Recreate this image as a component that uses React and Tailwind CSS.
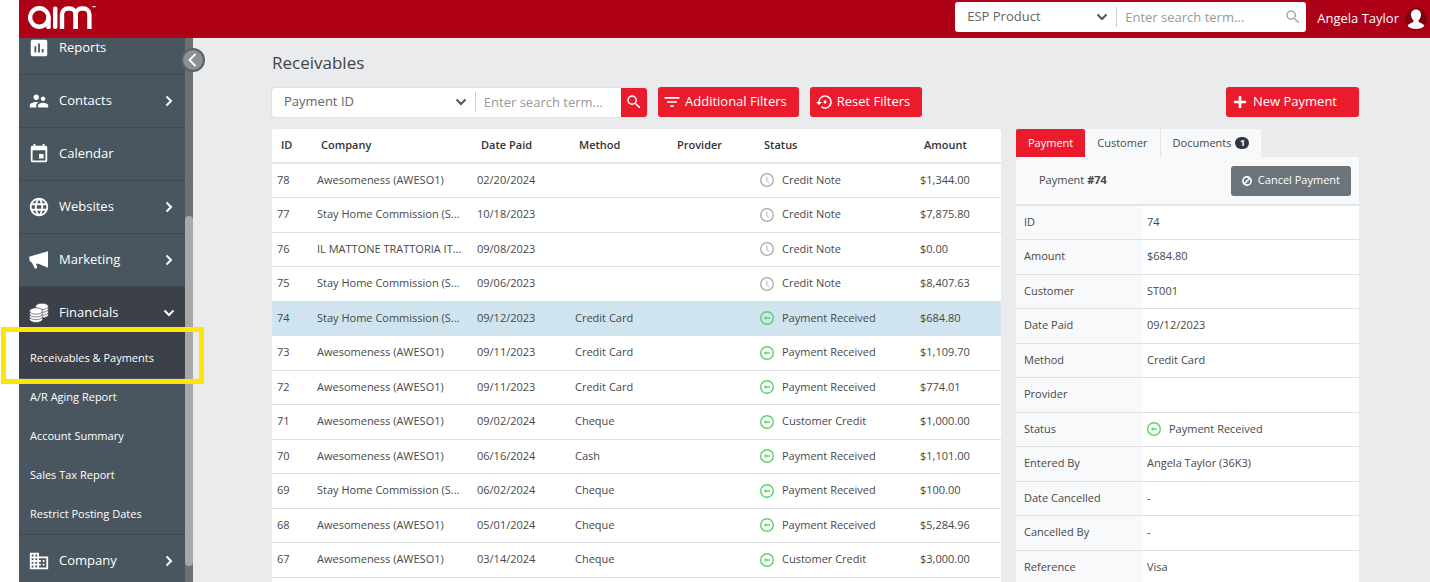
import { useState } from "react";
import clsx from "clsx";
import {
  MdAssessment,
  MdBusiness,
  MdEvent,
  MdFilterList,
  MdLanguage,
  MdSearch,
  MdSettingsBackupRestore,
  MdSupervisorAccount,
} from "react-icons/md";
import { FaPlus } from "react-icons/fa";

const menuTop = [
  { label: "Reports", icon: MdAssessment },
  { label: "Contacts", icon: MdSupervisorAccount, arrow: true },
  { label: "Calendar", icon: MdEvent },
  { label: "Websites", icon: MdLanguage, arrow: true },
  { label: "Marketing", icon: Bullhorn, arrow: true },
];

const financials = ["A/R Aging Report", "Account Summary", "Sales Tax Report", "Restrict Posting Dates"];

const payments = [
  { id: 78, company: "Awesomeness (AWESO1)", date: "02/20/2024", method: "", status: "Credit Note", amount: "$1,344.00" },
  { id: 77, company: "Stay Home Commission (S...", date: "10/18/2023", method: "", status: "Credit Note", amount: "$7,875.80" },
  { id: 76, company: "IL MATTONE TRATTORIA IT...", date: "09/08/2023", method: "", status: "Credit Note", amount: "$0.00" },
  { id: 75, company: "Stay Home Commission (S...", date: "09/06/2023", method: "", status: "Credit Note", amount: "$8,407.63" },
  { id: 74, company: "Stay Home Commission (S...", date: "09/12/2023", method: "Credit Card", status: "Payment Received", amount: "$684.80" },
  { id: 73, company: "Awesomeness (AWESO1)", date: "09/11/2023", method: "Credit Card", status: "Payment Received", amount: "$1,109.70" },
  { id: 72, company: "Awesomeness (AWESO1)", date: "09/11/2023", method: "Credit Card", status: "Payment Received", amount: "$774.01" },
  { id: 71, company: "Awesomeness (AWESO1)", date: "09/02/2024", method: "Cheque", status: "Customer Credit", amount: "$1,000.00" },
  { id: 70, company: "Awesomeness (AWESO1)", date: "06/16/2024", method: "Cash", status: "Payment Received", amount: "$1,101.00" },
  { id: 69, company: "Stay Home Commission (S...", date: "06/02/2024", method: "Cheque", status: "Payment Received", amount: "$100.00" },
  { id: 68, company: "Awesomeness (AWESO1)", date: "05/01/2024", method: "Cheque", status: "Payment Received", amount: "$5,284.96" },
  { id: 67, company: "Awesomeness (AWESO1)", date: "03/14/2024", method: "Cheque", status: "Customer Credit", amount: "$3,000.00" },
];

const details = [
  ["ID", "74"],
  ["Amount", "$684.80"],
  ["Customer", "ST001"],
  ["Date Paid", "09/12/2023"],
  ["Method", "Credit Card"],
  ["Provider", ""],
  ["Status", "Payment Received"],
  ["Entered By", "Angela Taylor (36K3)"],
  ["Date Cancelled", "-"],
  ["Cancelled By", "-"],
  ["Reference", "Visa"],
];

function Logo() {
  return (
    <svg viewBox="0 0 68 23" className="h-[23px] w-[68px]" fill="none" stroke="white" strokeWidth="4.4" role="img" aria-label="aim">
      <circle cx="11.300" cy="11.500" r="9.200" />
      <rect x="18.300" y="10" width="4.400" height="13" rx="1.500" fill="white" stroke="none" />
      <rect x="25" y="0.500" width="4.400" height="22.500" rx="2" fill="white" stroke="none" />
      <rect x="34" y="2.500" width="13.700" height="40" rx="6" />
      <rect x="47.700" y="2.500" width="13.700" height="40" rx="6" />
      <rect x="64.500" y="0" width="3" height="1.200" fill="white" stroke="none" />
    </svg>
  );
}

function Bullhorn({ className }) {
  return (
    <svg viewBox="0 0 20 20" className={className} fill="currentColor">
      <path d="M18.200 2v15L9.500 13.400H7.300l1.200 3.900-2.200.7-2.700-5.600L1.500 11 1 7z" />
    </svg>
  );
}

function Coins({ className }) {
  return (
    <svg viewBox="0 0 20 20" className={className} fill="currentColor" stroke="#3b4049" strokeWidth="0.600">
      <ellipse cx="12.700" cy="11.500" rx="5.900" ry="2.900" />
      <ellipse cx="12.700" cy="9" rx="5.900" ry="2.900" />
      <ellipse cx="12.700" cy="6.500" rx="5.900" ry="2.900" />
      <ellipse cx="12.700" cy="4" rx="5.900" ry="2.900" />
      <ellipse cx="7.300" cy="15.700" rx="5.900" ry="2.900" />
      <ellipse cx="7.300" cy="13.200" rx="5.900" ry="2.900" />
      <ellipse cx="7.300" cy="10.700" rx="5.900" ry="2.900" />
      <ellipse cx="7.300" cy="8.200" rx="5.900" ry="2.900" />
    </svg>
  );
}

function Chevron({ className }) {
  return (
    <svg viewBox="0 0 12 12" className={className} fill="none" stroke="currentColor" strokeWidth="2">
      <path d="M3.500 1.500 8 6l-4.500 4.500" />
    </svg>
  );
}

function Avatar() {
  return (
    <svg viewBox="0 0 22 22" className="size-[22px] shrink-0">
      <circle cx="11" cy="11" r="11" fill="#7d0013" />
      <path fill="white" d="M11 1.500c3.300 0 5 2.300 5 5.300 0 2-.9 4.200-2.400 5.500v1.500c.3 1 5 1.600 5.700 4.200C17.500 20 14.500 21 11 21s-6.500-1-8.300-3c.7-2.600 5.400-3.200 5.700-4.200v-1.500C6.900 11 6 8.800 6 6.800c0-3 1.700-5.300 5-5.300z" />
    </svg>
  );
}

function StatusIcon({ status }) {
  if (status === "Credit Note") {
    return (
      <svg viewBox="0 0 14 14" className="size-[14px] shrink-0" fill="none" stroke="#a9a9a9">
        <circle cx="7" cy="7" r="6.300" strokeWidth="1.300" />
        <path d="M6.800 3.800V7.500L9 9.800" />
      </svg>
    );
  }
  return (
    <svg viewBox="0 0 14 14" className="size-[14px] shrink-0" fill="none" stroke="#57d466">
      <circle cx="7" cy="7" r="6.300" strokeWidth="1.400" />
      <path d="M5 7h5" strokeWidth="1.400" />
      <path d="M6.300 5v4L3.800 7z" fill="#57d466" stroke="none" />
    </svg>
  );
}

function Status({ status }) {
  return (
    <span className="flex items-center gap-2">
      <StatusIcon status={status} />
      {status}
    </span>
  );
}

function MenuItem({ label, icon: Icon, arrow, open }) {
  return (
    <a
      href="#"
      className={clsx(
        "flex shrink-0 items-center pl-[9px] pr-2.5 text-[13px]",
        open ? "h-[52px] bg-[#3b4049]" : "h-[53px] border-b border-[#3f4a53]"
      )}
    >
      <Icon className="size-[22px]" />
      <span className="ml-[9px] grow">{label}</span>
      {arrow && <Chevron className={clsx("size-3", open && "rotate-90")} />}
    </a>
  );
}

function Sidebar() {
  return (
    <aside className="relative flex w-[174px] shrink-0 bg-[#49565f] text-white">
      <nav className="-mt-4 flex grow flex-col">
        {menuTop.map(item => (
          <MenuItem key={item.label} {...item} />
        ))}
        <MenuItem label="Financials" icon={Coins} arrow open />
        <div className="relative">
          <a href="#" className="flex h-[39px] items-center bg-[#3b4049] pl-[11px] text-[11px]">
            Receivables &amp; Payments
          </a>
          <div className="pointer-events-none absolute -bottom-1.5 -left-[18px] -right-[19px] -top-3 z-10 border-[5px] border-[#ffe600]" />
        </div>
        <div className="shrink-0 border-b border-[#3f4a53]">
          {financials.map(label => (
            <a key={label} href="#" className="flex h-[39px] items-center pl-[11px] text-[11px]">
              {label}
            </a>
          ))}
        </div>
        <MenuItem label="Company" icon={MdBusiness} arrow />
      </nav>
      <div className="w-2 shrink-0 bg-[#6f6f6f] pt-[178px]">
        <div className="h-[350px] rounded-sm bg-[#a8a8a8]" />
      </div>
      <button
        aria-label="Collapse menu"
        className="absolute -right-3 top-2.5 z-10 flex size-6 items-center justify-center rounded-full border-2 border-[#56616a] bg-[#8f8f8f]"
      >
        <svg viewBox="0 0 12 16" className="h-4 w-3" fill="none" stroke="white" strokeWidth="1.800">
          <path d="M8.500 2 2.500 8l6 6" />
        </svg>
      </button>
    </aside>
  );
}

function Picker({ label, options, className }) {
  return (
    <div className={clsx("relative flex h-full items-center", className)}>
      <select aria-label={label} className="h-full w-full appearance-none pl-3 pr-8 text-[13px] text-[#666] outline-none">
        {options.map(option => (
          <option key={option}>{option}</option>
        ))}
      </select>
      <Chevron className="pointer-events-none absolute right-2 size-3 rotate-90 text-[#555]" />
    </div>
  );
}

function Header() {
  return (
    <header className="relative z-20 flex h-[38px] shrink-0 items-center bg-[#ae0017] pl-[9px]">
      <a href="#" className="-mt-1">
        <Logo />
      </a>
      <div className="mb-1 ml-auto flex h-[30px] w-[351px] items-center overflow-hidden rounded-[3px] bg-white">
        <Picker label="Search type" options={["ESP Product", "Order"]} className="w-[161px] shrink-0" />
        <div className="h-5 w-px bg-[#ccc]" />
        <input aria-label="Search" placeholder="Enter search term..." className="h-full min-w-0 grow pl-2 text-[13px] outline-none placeholder:text-[#999]" />
        <button aria-label="Search" className="px-1">
          <MdSearch className="size-[18px] text-[#aaa]" />
        </button>
      </div>
      <a href="#" className="ml-[11px] mr-[3px] flex items-center gap-1.5 text-[13px] text-white">
        Angela Taylor
        <Avatar />
      </a>
    </header>
  );
}

function Toolbar() {
  return (
    <div className="mt-3 flex items-center">
      <div className="flex h-[29px] w-[375px] items-center overflow-hidden rounded-[3px] bg-white shadow-[0_0_1px_1px_#dfe0e2]">
        <Picker label="Filter by" options={["Payment ID", "Company"]} className="w-[203px] shrink-0" />
        <div className="h-5 w-px bg-[#ccc]" />
        <input aria-label="Filter term" placeholder="Enter search term..." className="h-full min-w-0 grow pl-2 text-[13px] outline-none placeholder:text-[#999]" />
        <button aria-label="Find" className="flex h-full w-[26px] shrink-0 items-center justify-center bg-[#ea1b2c]">
          <MdSearch className="size-[18px] text-white" />
        </button>
      </div>
      <button className="ml-[11px] flex h-[30px] items-center gap-[3px] rounded-[3px] bg-[#ea1b2c] pl-1 pr-3 text-[13px] text-white">
        <MdFilterList className="size-5" />
        Additional Filters
      </button>
      <button className="ml-[11px] flex h-[30px] items-center gap-[3px] rounded-[3px] bg-[#ea1b2c] pl-1.5 pr-3 text-[13px] text-white">
        <MdSettingsBackupRestore className="size-[18px]" />
        Reset Filters
      </button>
      <button className="ml-auto flex h-[30px] items-center gap-1.5 rounded-[3px] bg-[#ea1b2c] pl-[7px] pr-[22px] text-[13px] text-white">
        <FaPlus className="size-[14px]" />
        New Payment
      </button>
    </div>
  );
}

function PaymentsTable({ selected, onSelect }) {
  return (
    <table className="w-full table-fixed rounded-t-[3px] bg-white text-left text-[11px] text-[#484848]">
      <colgroup>
        <col className="w-[40px]" />
        <col className="w-[160px]" />
        <col className="w-[98px]" />
        <col className="w-[98px]" />
        <col className="w-[87px]" />
        <col className="w-[160px]" />
        <col className="w-[86px]" />
      </colgroup>
      <thead>
        <tr className="h-[34px] border-b-2 border-[#e3e4e6] text-[#333]">
          {["ID", "Company", "Date Paid", "Method", "Provider", "Status", "Amount"].map(title => (
            <th key={title} className="px-[9px] font-semibold">{title}</th>
          ))}
        </tr>
      </thead>
      <tbody>
        {payments.map(payment => (
          <tr
            key={payment.id}
            onClick={() => onSelect(payment.id)}
            className={clsx("border-b border-[#dfe0e2] odd:h-[34px] even:h-[35px]", payment.id === selected && "bg-[#cfe4ee]")}
          >
            <td className="px-[5px]">{payment.id}</td>
            <td className="whitespace-nowrap px-[5px]">{payment.company}</td>
            <td className="px-[5px]">{payment.date}</td>
            <td className="px-[5px]">{payment.method}</td>
            <td></td>
            <td className="px-[5px]">
              <Status status={payment.status} />
            </td>
            <td className="px-[5px]">{payment.amount}</td>
          </tr>
        ))}
        <tr className="h-[34px]"><td colSpan={7}></td></tr>
      </tbody>
    </table>
  );
}

function DetailPanel() {
  return (
    <div className="text-[11px] text-[#484848]">
      <div className="flex h-7" role="tablist">
        <button role="tab" aria-selected="true" className="rounded-t-[2px] bg-[#ea1b2c] px-3 text-white">Payment</button>
        <button role="tab" className="border-r border-[#e3e4e6] bg-[#f8f9fa] px-3">Customer</button>
        <button role="tab" className="flex items-center gap-1 bg-[#f8f9fa] px-3">
          Documents
          <span className="flex h-3 w-[14px] items-center justify-center rounded-full bg-[#32383e] text-[9px] font-bold text-white">1</span>
        </button>
      </div>
      <div className="flex h-[47px] items-center justify-between bg-[#f8f9fb] pl-[23px] pr-2">
        <span>Payment <b>#74</b></span>
        <button className="flex h-[30px] items-center gap-1.5 rounded-[3px] bg-[#6c747c] px-[11px] text-white">
          <svg viewBox="0 0 10 10" className="size-2.5" fill="none" stroke="currentColor" strokeWidth="1.600">
            <circle cx="5" cy="5" r="4.100" />
            <path d="M2.300 7.700 7.700 2.300" />
          </svg>
          Cancel Payment
        </button>
      </div>
      <table className="w-full table-fixed border-t-2 border-[#e3e4e6] text-left">
        <colgroup>
          <col className="w-[127px]" />
          <col />
        </colgroup>
        <tbody>
          {details.map(([label, value]) => (
            <tr key={label} className="border-b border-[#dfe0e2] odd:h-[34px] even:h-[35px]">
              <th className="bg-[#f8f9fb] px-2 font-normal">{label}</th>
              <td className="bg-white px-1">{label === "Status" ? <Status status={value} /> : value}</td>
            </tr>
          ))}
        </tbody>
      </table>
    </div>
  );
}

export default function App() {
  const [selected, setSelected] = useState(74);

  return (
    <div className="flex h-screen flex-col overflow-hidden bg-white pl-[19px] font-['Open_Sans',sans-serif]">
      <Header />
      <div className="flex min-h-0 grow">
        <Sidebar />
        <main className="min-w-0 grow bg-[#eaebed] pl-[79px] pr-[71px] pt-3">
          <h1 className="text-[17px] leading-[25px] text-[#444]">Receivables</h1>
          <Toolbar />
          <div className="mt-3 grid grid-cols-[729fr_343fr] items-start gap-[15px]">
            <PaymentsTable selected={selected} onSelect={setSelected} />
            <DetailPanel />
          </div>
        </main>
      </div>
    </div>
  );
}
